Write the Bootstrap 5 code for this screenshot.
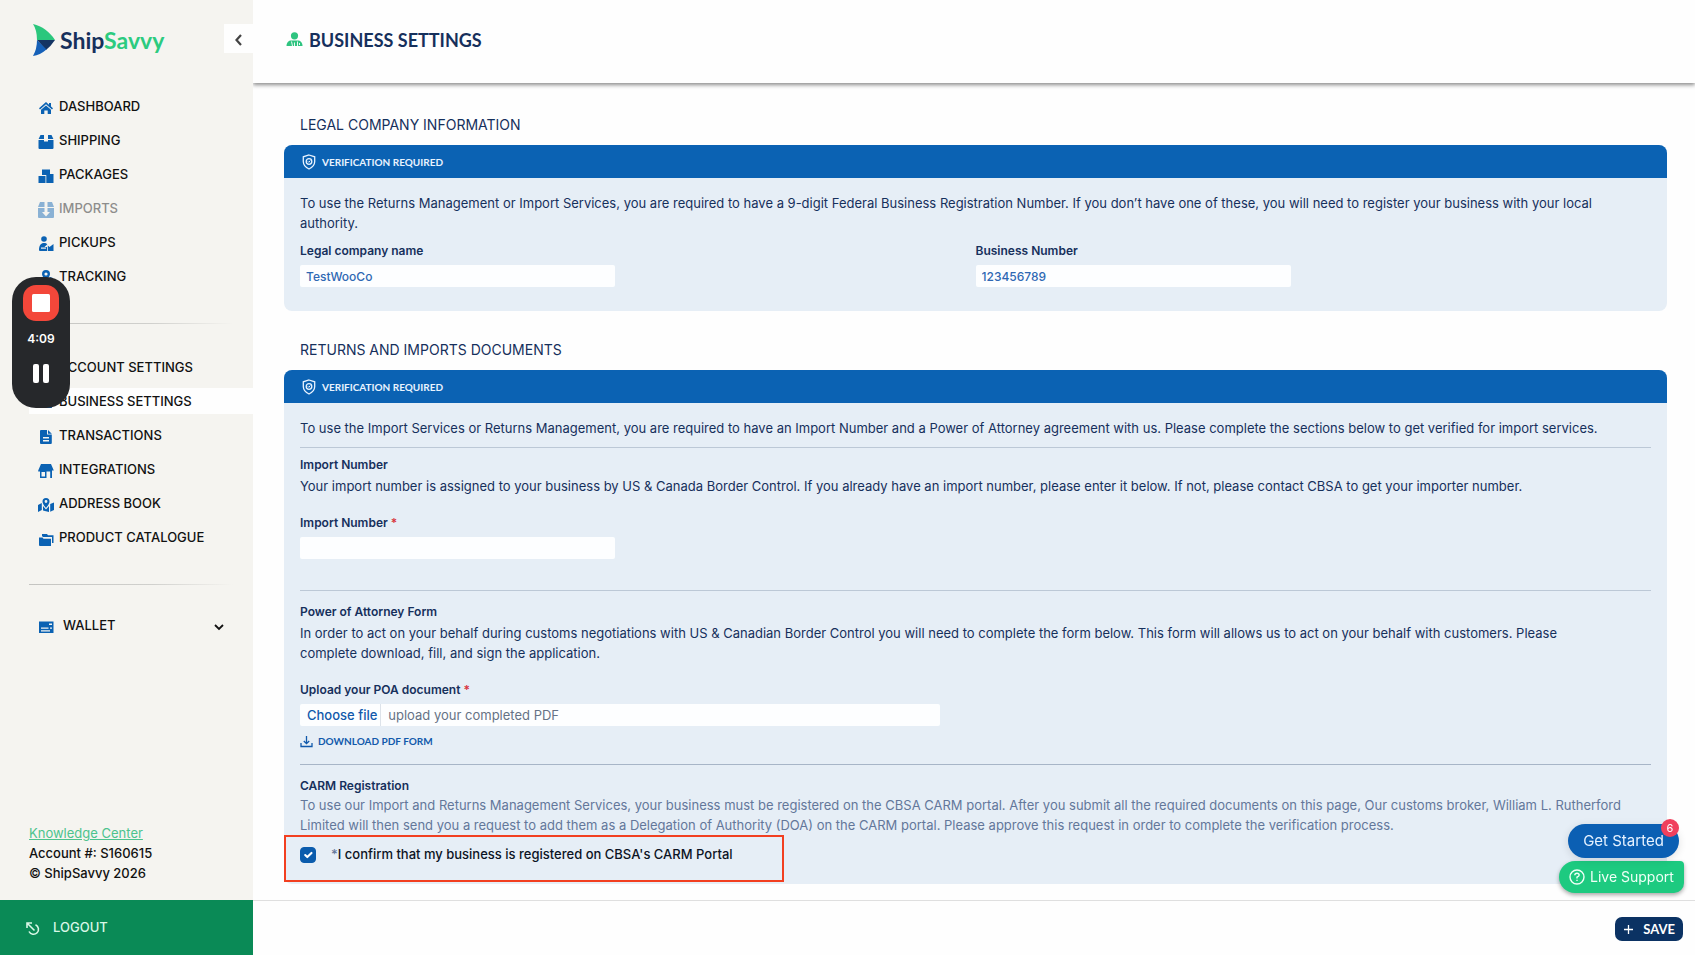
<!DOCTYPE html>
<html lang="en">
<head>
<meta charset="utf-8">
<meta name="viewport" content="width=device-width, initial-scale=1">
<title>Business Settings - ShipSavvy</title>
<link href="https://cdn.jsdelivr.net/npm/bootstrap@5.3.0/dist/css/bootstrap.min.css" rel="stylesheet">
<style>
:root { --navy:#16305c; --blue:#0b62b3; --brand-green:#2ccb7f; --panel:#e6eef6; }
body { font-family:Inter,"Liberation Sans",sans-serif; font-size:13px; line-height:20px; color:var(--navy); background:#fefefe; }

/* sidebar */
.side { width:253px; background:#f5f4f0; color:#111; }
.brand-row { height:93px; padding:24px 0 0 33px; }
.brand-name { font:700 23px/28px Lato,sans-serif; color:var(--navy); }
.brand-name span { color:var(--brand-green); }
.collapse-btn { width:29px; height:29px; background:#fefefe; border:0; color:#444; }
.menu { gap:8px; padding-left:29px; }
.menu a, .menu button { height:26px; padding:0 0 0 9px; gap:5px; color:#111; font-weight:500; text-decoration:none; background:none; border:0; width:100%; text-align:left; }
.menu a.active { background:#fefefe; }
.menu a.muted-item { color:#8d8d8c; }
.menu a.muted-item svg { opacity:.45; }
.menu svg.ico { width:16px; height:16px; fill:var(--blue); flex:none; margin-top:3px; }
.menu button { gap:9px; padding-right:29px; }
.fade-rule { height:1px; margin:34px 20px 30px 29px; background:linear-gradient(90deg,#c4c4c1 0,#d0d0cd 60%,#f5f4f0 100%); }
.fade-rule.wallet-rule { margin-bottom:27px; }
.side-foot { padding:0 0 17px 29px; font-weight:500; }
.side-foot a { color:#4cc38d; font-weight:400; }
.logout { height:55px; padding:0 0 2px 26px; gap:13px; background:#0a8a56; color:#d9f7e6; font-weight:500; text-decoration:none; }

/* recorder */
.recorder { position:fixed; left:12px; top:277px; width:58px; height:131px; border-radius:24px; background:#26282b; color:#fff; padding:8px 0; z-index:5; }
.stop-btn { width:36px; height:36px; border:0; border-radius:13px; background:#f3473a; }
.recorder time { font-size:12px; font-weight:600; line-height:16px; margin-top:10px; }
.pause-btn { border:0; background:none; margin-top:17px; padding:0; line-height:0; }

/* main */
.top { height:83px; padding:24px 31px 0 33px; gap:6px; background:#fefefe; box-shadow:0 2px 4px rgba(0,0,0,.45); }
.top h1 { font:700 18px/32px Lato,sans-serif; margin:0; }
.content-area { padding:32px 28px 16px 31px; }
.sect-title { font-size:14px; font-weight:400; line-height:20px; margin:0 0 10px 16px; }
.panel + .sect-title { margin-top:29px; }
.panel { background:var(--panel); border-radius:8px; }
.panel-head { height:33px; padding:0 18px; gap:6px; border-radius:8px 8px 0 0; background:var(--blue); color:#e9f3ff; font:700 10px/16px Lato,sans-serif; }
.panel-body { padding:15px 16px 2px; }
.panel-body p { margin:0; padding-right:24px; }
.panel-body p.intro { margin-bottom:9px; }
.panel-body p.detail { margin-bottom:18px; padding-top:2px; }
.panel-body h3, .panel-body .form-label { font-size:12px; font-weight:600; line-height:18px; margin:0; }
.panel-body .form-label { display:block; margin-bottom:5px; }
.panel-body hr { margin:0 0 8px; border-color:#7d8fa8; opacity:.4; }
.panel-body hr.poa-rule { margin:31px 0 12px; }
.panel-body hr.carm-rule { margin:11px 0 12px; opacity:.6; }
.field { width:100%; max-width:315px; height:22px; padding:0 6px; border:0; border-radius:2px; background:#fdfeff; color:#2f68b3; font-size:12px; font-weight:500; }
.field:focus { outline:1px solid var(--blue); }
.file-row { width:100%; max-width:640px; height:22px; background:#fdfeff; border-radius:2px; }
.file-row label { padding:0 3px 0 7px; line-height:22px; color:#1159ab; font-weight:500; border-right:1px solid #dde3ea; cursor:pointer; }
.file-row .file-name { border:0; background:none; padding:0 7px; min-width:0; color:#6b7686; }
.file-name::placeholder { color:#667285; }
.req { color:#d8343f; }
.download { color:#1159ab; font:700 10px/16px Lato,sans-serif; gap:5px; margin-top:7px; text-decoration:none; }
.soft { color:#63779a; }
.confirm { width:500px; max-width:100%; height:47px; border:2px solid #f23f20; padding:7px 14px; color:#0c1424; font-weight:500; gap:15px; margin-left:-16px; }
.confirm .form-check-input { width:16px; height:16px; margin:3px 0 0; border-radius:4px; flex:none; }
.confirm .form-check-input:checked { background-color:#0b5cad; border-color:#0b5cad; }
.foot-bar { height:55px; border-top:1px solid #dfdfdf; padding:2px 12px 0; }
.save { height:24px; padding:0 8px; gap:9px; border:0; border-radius:7px; background:#0b3263; color:#fff; font:700 13px/24px Lato,sans-serif; }

/* floating help buttons */
.float-help { position:fixed; right:11px; bottom:62px; gap:3px; z-index:5; }
.started { position:relative; height:34px; width:111px; margin-right:5px; border:0; border-radius:17px; background:#0b5fb3; color:#e6f2ff; font-size:15px; padding:0; box-shadow:0 2px 8px rgba(0,0,0,.12); }
.count { position:absolute; right:0; top:-5px; width:18px; height:18px; border-radius:50%; background:#f0405d; color:#fff; font-size:11px; line-height:18px; }
.support { height:32px; width:125px; border:0; border-radius:16px 4px 10px 16px; background:#1dca80; color:#effff6; font-size:14px; padding:0 8px 0 10px; gap:5px; box-shadow:0 2px 4px rgba(0,0,0,.35); }
</style>
</head>
<body>
<div class="d-flex min-vh-100">
  <nav class="side d-flex flex-column flex-shrink-0" aria-label="Main">
    <div class="brand-row d-flex justify-content-between align-items-start">
      <div class="d-flex align-items-center">
        <svg width="23" height="32" viewBox="0 0 23 32" aria-hidden="true"><path d="M0 0C9 2 17 8 22 16H4Q4 6 0 0z" fill="#2bc77d"/><path d="M4 16h18q-4 6-9 10z" fill="#143463"/><path d="M4 16l9.500 9.500Q7 31 0 32 4 25 4 16z" fill="#1560b8"/></svg>
        <span class="brand-name ms-1">Ship<span>Savvy</span></span>
      </div>
      <button class="collapse-btn p-0" aria-label="Collapse menu"><svg width="10" height="14" viewBox="0 0 10 14" fill="none" stroke="currentColor" stroke-width="2.2"><path d="M7 2L2.500 7 7 12"/></svg></button>
    </div>
    <div class="menu d-flex flex-column">
      <a href="#" class="d-flex align-items-center"><svg class="ico" viewBox="0 0 16 16"><path d="M8 2L1 8.300l1 1.200L8 4.200l6 5.300 1-1.200-2-1.800V3h-2v1.700z"/><path d="M3 9.800L8 5.400l5 4.400V14H9.700v-3.500H6.300V14H3z"/></svg>DASHBOARD</a>
      <a href="#" class="d-flex align-items-center"><svg class="ico" viewBox="0 0 16 16"><path d="M2.500 1H6v4H.6zM10 1h3.500l1.900 4H10zM.5 6H6v1.500h4V6h5.500v8a1 1 0 0 1-1 1h-13a1 1 0 0 1-1-1z"/></svg>SHIPPING</a>
      <a href="#" class="d-flex align-items-center"><svg class="ico" viewBox="0 0 16 16"><path d="M4 1.500h8v5.500H4zM.5 8h7v7h-7zM8.300 6h7.200v9H8.300z"/></svg>PACKAGES</a>
      <a href="#" class="muted-item d-flex align-items-center"><svg class="ico" viewBox="0 0 16 16"><path d="M2 0h4.500v5H0zM9.500 0H14l2 5H9.500zM0 6h6.500v4H4l4 4.500L12 10H9.500V6H16v9a1 1 0 0 1-1 1H1a1 1 0 0 1-1-1z"/></svg>IMPORTS</a>
      <a href="#" class="d-flex align-items-center"><svg class="ico" viewBox="0 0 16 16"><circle cx="6" cy="3" r="2.800"/><path d="M1 14c0-4.500 2-7 5-7 1.600 0 2.600.5 3.300 1.300L6.500 11H9v4H2a1 1 0 0 1-1-1z"/><path d="M9.800 9.500l1.700 1.600L15.500 8v7h-5.700z"/><path d="M3 11.500h5v1.200H3z" fill="#f5f4f0"/></svg>PICKUPS</a>
      <a href="#" class="d-flex align-items-center"><svg class="ico" viewBox="0 0 16 16"><path fill-rule="evenodd" d="M8 0a4 4 0 0 1 4 4c0 2.500-4 7-4 7S4 6.500 4 4a4 4 0 0 1 4-4zm0 2.400a1.600 1.600 0 1 0 0 3.200 1.600 1.600 0 0 0 0-3.200z"/><path d="M1 8l3-1 4 5.500L12 7l3 1v7H1z"/></svg>TRACKING</a>
    </div>
    <div class="fade-rule"></div>
    <div class="menu d-flex flex-column">
      <a href="#" class="d-flex align-items-center"><svg class="ico" viewBox="0 0 16 16"><circle cx="8" cy="5" r="3"/><path d="M2 15q0-6 6-6t6 6z"/></svg>ACCOUNT SETTINGS</a>
      <a href="#" class="active d-flex align-items-center" aria-current="page"><svg class="ico" viewBox="0 0 16 16"><circle cx="8" cy="4" r="3"/><path d="M2 13q0-5 6-5t6 5z"/></svg>BUSINESS SETTINGS</a>
      <a href="#" class="d-flex align-items-center"><svg class="ico" viewBox="0 0 16 16"><path fill-rule="evenodd" d="M3 1h6v4.500h4.800V14a1 1 0 0 1-1 1H3a1 1 0 0 1-1-1V2a1 1 0 0 1 1-1zm2 7v1.400h6V8zm0 3v1.400h6V11z"/><path d="M10 1l3.800 3.700H10z"/></svg>TRANSACTIONS</a>
      <a href="#" class="d-flex align-items-center"><svg class="ico" viewBox="0 0 16 16"><path fill-rule="evenodd" d="M3 1h10l2.800 6.500H14V15h-1.800V8.500H8.500V15H2V8.500H.2V7.500zM3.500 9v4.500H7V9z"/></svg>INTEGRATIONS</a>
      <a href="#" class="d-flex align-items-center"><svg class="ico" viewBox="0 0 16 16"><path fill-rule="evenodd" d="M8 1a3.500 3.500 0 0 1 3.500 3.500C11.500 7 8 11 8 11S4.500 7 4.500 4.500A3.500 3.500 0 0 1 8 1zm0 2.100a1.400 1.400 0 1 0 0 2.800 1.400 1.400 0 0 0 0-2.800z"/><path d="M0 8l3.800-2v7L0 15zM5 9l3 3.500L11 9v6l-6-1.500zM12.200 7L16 5.500V13l-3.800 1.800z"/></svg>ADDRESS BOOK</a>
      <a href="#" class="d-flex align-items-center"><svg class="ico" viewBox="0 0 16 16"><path d="M4 5V3h5l1 1.300h5.500V12H14V6H5z"/><path d="M1 6.500h3.500l1 1.200h7.500V15H2a1 1 0 0 1-1-1z"/></svg>PRODUCT CATALOGUE</a>
    </div>
    <div class="fade-rule wallet-rule"></div>
    <div class="menu d-flex flex-column">
      <button class="d-flex align-items-center"><svg class="ico" viewBox="0 0 16 16"><path fill-rule="evenodd" d="M1 2.500h14.500v11.500H1zm10 2v1.600h3V4.500zM3 8.500v1.300h7.500V8.500zm9 0v1.300h2V8.500zM3 11.300v1.200h9v-1.200z"/></svg>WALLET
        <svg class="ms-auto mt-1" width="10" height="7" viewBox="0 0 10 7" fill="none" stroke="#111" stroke-width="1.800"><path d="M1 1l4 4 4-4"/></svg></button>
    </div>
    <div class="side-foot mt-auto"><a href="#">Knowledge Center</a><br>Account #: S160615<br>© ShipSavvy 2026</div>
    <a href="#" class="logout d-flex align-items-center"><svg class="mt-1" width="14" height="14" viewBox="0 0 14 14" fill="none" stroke="currentColor" stroke-width="1.600"><path d="M1 6V1h5M1.200 1.200l7.300 7.300M9.500 2.700A5 5 0 1 1 3 9.500"/></svg>LOGOUT</a>
  </nav>

  <main class="d-flex flex-column flex-grow-1 overflow-hidden">
    <header class="top d-flex align-items-start">
      <svg class="mt-2" width="17" height="16" viewBox="0 0 17 16" fill="#2fc480" aria-hidden="true"><circle cx="8.500" cy="3.800" r="3.600"/><path d="M.5 14c0-3.500 2-5.500 5-5.500h6c3 0 5 2 5 5.500z"/><path d="M5.500 9.500l1 4.500M8.500 10.500v3.500M11.500 9.500v4.500M13.500 11v2" stroke="#fff" stroke-width=".9"/></svg>
      <h1>BUSINESS SETTINGS</h1>
    </header>
    <form class="content-area" onsubmit="return false">
      <h2 class="sect-title">LEGAL COMPANY INFORMATION</h2>
      <section class="panel">
        <div class="panel-head d-flex align-items-center">
          <svg width="14" height="16" viewBox="0 0 14 16" fill="none" stroke="currentColor" stroke-width="1.300"><path d="M7 1l5.700 1.800v5Q12.500 12.500 7 15 1.500 12.500 1.300 7.800v-5z"/><circle cx="7" cy="7.500" r="2.800"/><path d="M5.800 7.300l1 1 1.500-1.700" stroke-width="1"/></svg>VERIFICATION REQUIRED</div>
        <div class="panel-body pb-4">
          <p class="intro">To use the Returns Management or Import Services, you are required to have a 9-digit Federal Business Registration Number. If you don’t have one of these, you will need to register your business with your local authority.</p>
          <div class="row g-0">
            <div class="col-6"><label class="form-label" for="company">Legal company name</label><input class="field d-block" id="company" type="text" value="TestWooCo"></div>
            <div class="col-6"><label class="form-label" for="bn">Business Number</label><input class="field d-block" id="bn" type="text" value="123456789"></div>
          </div>
        </div>
      </section>

      <h2 class="sect-title">RETURNS AND IMPORTS DOCUMENTS</h2>
      <section class="panel">
        <div class="panel-head d-flex align-items-center">
          <svg width="14" height="16" viewBox="0 0 14 16" fill="none" stroke="currentColor" stroke-width="1.300"><path d="M7 1l5.700 1.800v5Q12.500 12.500 7 15 1.500 12.500 1.300 7.800v-5z"/><circle cx="7" cy="7.500" r="2.800"/><path d="M5.800 7.300l1 1 1.500-1.700" stroke-width="1"/></svg>VERIFICATION REQUIRED</div>
        <div class="panel-body">
          <p class="intro">To use the Import Services or Returns Management, you are required to have an Import Number and a Power of Attorney agreement with us. Please complete the sections below to get verified for import services.</p>
          <hr>
          <h3>Import Number</h3>
          <p class="detail">Your import number is assigned to your business by US &amp; Canada Border Control. If you already have an import number, please enter it below. If not, please contact CBSA to get your importer number.</p>
          <label class="form-label" for="imp">Import Number <span class="req">*</span></label>
          <input class="field d-block" id="imp" type="text">
          <hr class="poa-rule">
          <h3>Power of Attorney Form</h3>
          <p class="detail pe-5">In order to act on your behalf during customs negotiations with US &amp; Canadian Border Control you will need to complete the form below. This form will allows us to act on your behalf with customers. Please complete download, fill, and sign the application.</p>
          <label class="form-label" for="poa">Upload your POA document <span class="req">*</span></label>
          <div class="file-row d-flex">
            <label for="poa">Choose file</label><input class="visually-hidden" id="poa" type="file">
            <input class="file-name flex-grow-1" type="text" readonly placeholder="upload your completed PDF" aria-label="Selected file">
          </div>
          <a href="#" class="download d-inline-flex align-items-center"><svg width="13" height="13" viewBox="0 0 13 13" fill="none" stroke="currentColor" stroke-width="1.300"><path d="M1 8v3.500h11V8M6.500 1v7.500M3.800 6l2.700 2.700L9.200 6"/></svg>DOWNLOAD PDF FORM</a>
          <hr class="carm-rule">
          <h3>CARM Registration</h3>
          <p class="soft">To use our Import and Returns Management Services, your business must be registered on the CBSA CARM portal. After you submit all the required documents on this page, Our customs broker, William L. Rutherford Limited will then send you a request to add them as a Delegation of Authority (DOA) on the CARM portal. Please approve this request in order to complete the verification process.</p>
          <div class="confirm d-flex align-items-start"><input class="form-check-input" type="checkbox" id="carm" checked><label for="carm"><span class="soft">*</span>I confirm that my business is registered on CBSA's CARM Portal</label></div>
        </div>
      </section>
    </form>
    <footer class="foot-bar d-flex align-items-center justify-content-end mt-auto">
      <button class="save d-flex align-items-center"><svg width="11" height="11" viewBox="0 0 11 11" stroke="currentColor" stroke-width="1.300"><path d="M5.500 1v9M1 5.500h9"/></svg>SAVE</button>
    </footer>
  </main>
</div>

<div class="recorder d-flex flex-column align-items-center">
  <button class="stop-btn d-flex align-items-center justify-content-center p-0" aria-label="Stop recording"><svg width="18" height="18"><rect width="18" height="18" rx="1.500" fill="#fff"/></svg></button>
  <time>4:09</time>
  <button class="pause-btn" aria-label="Pause recording"><svg width="16" height="19" fill="#fff"><rect width="6" height="19" rx="2"/><rect x="10" width="6" height="19" rx="2"/></svg></button>
</div>

<div class="float-help d-flex flex-column align-items-end">
  <button class="started">Get Started<span class="count">6</span></button>
  <button class="support d-flex align-items-center"><svg width="16" height="16" viewBox="0 0 16 16" fill="none" stroke="currentColor" stroke-width="1.400"><circle cx="8" cy="8" r="7"/><path d="M5.800 6.300Q5.900 4.200 8 4.200t2.200 1.900Q10.200 7.200 8 8.200v1.300M8 10.700v1.400"/></svg>Live Support</button>
</div>
<script src="https://cdn.jsdelivr.net/npm/bootstrap@5.3.0/dist/js/bootstrap.bundle.min.js"></script>
</body>
</html>
